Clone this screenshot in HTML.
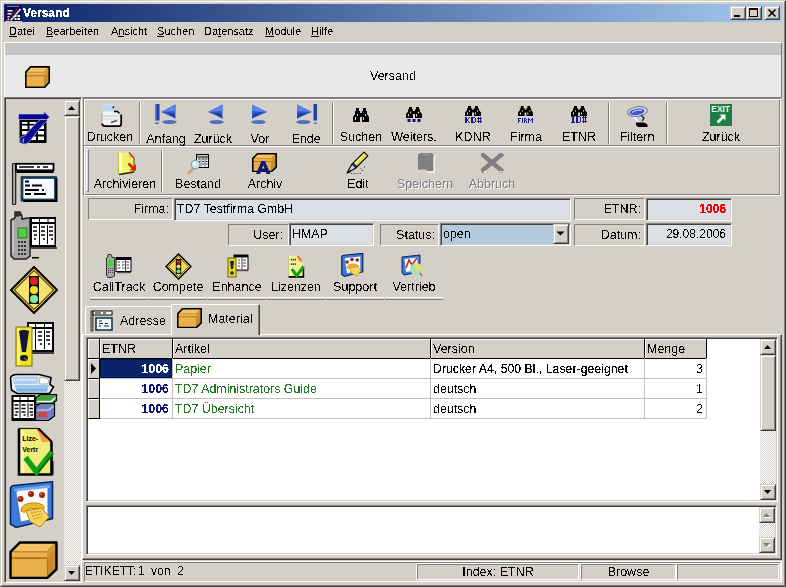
<!DOCTYPE html>
<html><head><meta charset="utf-8">
<style>
*{box-sizing:border-box;margin:0;padding:0}
html,body{width:786px;height:587px;overflow:hidden;background:#D4D0C8;font-family:"Liberation Sans",sans-serif;font-size:12.5px;color:#000}
.a{position:absolute}
.t{position:absolute;white-space:pre;line-height:14px;filter:url(#bin)}
.sk1{border-top:1px solid #808080;border-left:1px solid #808080;border-right:1px solid #fff;border-bottom:1px solid #fff}
.sk2{border-top:1px solid #808080;border-left:1px solid #808080;border-right:1px solid #fff;border-bottom:1px solid #fff;box-shadow:inset 1px 1px 0 #404040, inset -1px -1px 0 #D4D0C8}
.rz2{border-top:1px solid #D4D0C8;border-left:1px solid #D4D0C8;border-right:1px solid #404040;border-bottom:1px solid #404040;box-shadow:inset 1px 1px 0 #fff, inset -1px -1px 0 #808080;background:#D4D0C8}
.rz1{border-top:1px solid #fff;border-left:1px solid #fff;border-right:1px solid #808080;border-bottom:1px solid #808080}
.dith{background-color:#fff;background-image:linear-gradient(45deg,#D4D0C8 25%,transparent 25%,transparent 75%,#D4D0C8 75%),linear-gradient(45deg,#D4D0C8 25%,transparent 25%,transparent 75%,#D4D0C8 75%);background-size:2px 2px;background-position:0 0,1px 1px}
.lbl{position:absolute;text-align:center;white-space:pre;line-height:14px;font-size:12.5px;filter:url(#bin)}
</style></head><body>
<svg width="0" height="0" style="position:absolute"><filter id="bin" x="0" y="0" width="100%" height="100%" color-interpolation-filters="sRGB"><feComponentTransfer><feFuncA type="discrete" tableValues="0 1"/></feComponentTransfer></filter><filter id="binb" x="0" y="0" width="100%" height="100%" color-interpolation-filters="sRGB"><feComponentTransfer><feFuncA type="discrete" tableValues="0 1 1"/></feComponentTransfer></filter><filter id="binm" x="0" y="0" width="100%" height="100%" color-interpolation-filters="sRGB"><feComponentTransfer><feFuncA type="discrete" tableValues="0 0 1 1 1"/></feComponentTransfer></filter></svg>
<!-- window frame -->
<div class="a" style="left:0;top:0;width:786px;height:587px;border-top:1px solid #D4D0C8;border-left:1px solid #D4D0C8;border-right:1px solid #404040;border-bottom:1px solid #404040"></div>
<div class="a" style="left:1px;top:1px;width:784px;height:585px;border-top:1px solid #fff;border-left:1px solid #fff;border-right:1px solid #808080;border-bottom:1px solid #808080"></div>

<!-- title bar -->
<div class="a" style="left:4px;top:4px;width:778px;height:18px;background:linear-gradient(to right,#0A246A,#A6CAF0)"></div>
<svg class="a" style="left:5px;top:5px" width="17" height="17" viewBox="0 0 17 17">
<rect x="0.5" y="0" width="16" height="16" fill="#08084A"/>
<rect x="2" y="0.8" width="12" height="1" fill="#9090D0"/>
<rect x="2.5" y="5" width="5" height="1.5" fill="#fff"/><rect x="2.5" y="8" width="4" height="1.5" fill="#fff"/><rect x="2.5" y="11" width="2" height="1.5" fill="#fff"/><rect x="2.5" y="14" width="2" height="1.2" fill="#fff"/>
<rect x="9.5" y="10" width="5.5" height="5" fill="#fff"/><path d="M9.5 12.5 H15 M12 10 V15" stroke="#000" stroke-width="0.9"/>
<path d="M1.5 15.5 L12.5 3.5" stroke="#C82828" stroke-width="1.3" stroke-dasharray="1.2 0.8"/>
<path d="M5.5 15.5 L15.5 4" stroke="#E8E8F0" stroke-width="1.8"/>
<path d="M5 15 L15 3.5" stroke="#000" stroke-width="0.7" stroke-dasharray="1 1.5"/>
<rect x="0" y="16" width="17" height="1" fill="#C0C0D8"/>
</svg>
<div class="t" style="left:23px;top:5px;color:#fff;font-weight:bold;font-size:12px;line-height:16px;filter:url(#binb)">Versand</div>
<!-- title buttons -->
<div class="a rz2" style="left:730px;top:6px;width:16px;height:14px"></div>
<div class="a" style="left:734px;top:15px;width:6px;height:2px;background:#000"></div>
<div class="a rz2" style="left:746px;top:6px;width:16px;height:14px"></div>
<div class="a" style="left:749px;top:8px;width:9px;height:9px;border:1px solid #000;border-top-width:2px"></div>
<div class="a rz2" style="left:764px;top:6px;width:16px;height:14px"></div>
<svg class="a" style="left:764px;top:6px" width="16" height="14"><path d="M4.5 3.5 L11.5 10.5 M11.5 3.5 L4.5 10.5" stroke="#000" stroke-width="1.6"/></svg>

<!-- menu -->
<div class="t" style="left:9px;top:24px;font-size:11px;line-height:14px"><u>D</u>atei</div>
<div class="t" style="left:46px;top:24px;font-size:11px;line-height:14px"><u>B</u>earbeiten</div>
<div class="t" style="left:111px;top:24px;font-size:11px;line-height:14px">A<u>n</u>sicht</div>
<div class="t" style="left:157px;top:24px;font-size:11px;line-height:14px"><u>S</u>uchen</div>
<div class="t" style="left:204px;top:24px;font-size:11px;line-height:14px">Da<u>t</u>ensatz</div>
<div class="t" style="left:265px;top:24px;font-size:11px;line-height:14px"><u>M</u>odule</div>
<div class="t" style="left:311px;top:24px;font-size:11px;line-height:14px"><u>H</u>ilfe</div>

<!-- header panel -->
<div class="a" style="left:4px;top:42px;width:778px;height:56px;border-top:1px solid #fff;border-left:1px solid #fff;border-right:1px solid #808080;border-bottom:1px solid #808080;background:#E9E9E9"></div>
<div class="a" style="left:5px;top:43px;width:776px;height:12px;background:#C4C4C4"></div>
<div class="t" style="left:370px;top:69px;font-size:12.5px">Versand</div>

<!-- sidebar -->
<div class="a sk2" style="left:4px;top:97px;width:78px;height:486px"></div>
<div class="a rz2" style="left:64px;top:100px;width:16px;height:16px"></div>
<svg class="a" style="left:64px;top:100px" width="16" height="16"><path d="M4 10 H11 L7.5 6 Z" fill="#000"/></svg>
<div class="a rz2" style="left:64px;top:116px;width:16px;height:265px"></div>
<div class="a dith" style="left:64px;top:381px;width:17px;height:185px"></div>
<div class="a rz2" style="left:64px;top:565px;width:16px;height:16px"></div>
<svg class="a" style="left:64px;top:565px" width="16" height="16"><path d="M4 6 H11 L7.5 10 Z" fill="#000"/></svg>

<!-- content container -->


<!-- toolbar bands -->
<div class="a" style="left:83px;top:98px;width:698px;height:49px;border-top:1px solid #808080;border-left:1px solid #808080;border-right:1px solid #fff;border-bottom:1px solid #fff;box-shadow:inset 1px 1px 0 #fff, inset -1px -1px 0 #808080"></div>
<div class="a" style="left:83px;top:145px;width:698px;height:51px;border-top:1px solid #808080;border-left:1px solid #808080;border-right:1px solid #fff;border-bottom:1px solid #fff;box-shadow:inset 1px 1px 0 #fff, inset -1px -1px 0 #808080"></div>


<!-- toolbar separators -->
<div class="a" style="left:139px;top:102px;width:2px;height:42px;border-left:1px solid #808080;border-right:1px solid #fff"></div>
<div class="a" style="left:332px;top:102px;width:2px;height:42px;border-left:1px solid #808080;border-right:1px solid #fff"></div>
<div class="a" style="left:608px;top:102px;width:2px;height:42px;border-left:1px solid #808080;border-right:1px solid #fff"></div>
<div class="a" style="left:666px;top:102px;width:2px;height:42px;border-left:1px solid #808080;border-right:1px solid #fff"></div>
<div class="a" style="left:86px;top:149px;width:3px;height:43px;border-left:1px solid #fff;border-top:1px solid #fff;border-right:1px solid #808080;border-bottom:1px solid #808080"></div>
<div class="a" style="left:161px;top:150px;width:2px;height:42px;border-left:1px solid #808080;border-right:1px solid #fff"></div>

<!-- toolbar labels -->
<div class="lbl" style="left:80px;width:60px;top:130px">Drucken</div>
<div class="lbl" style="left:136px;width:60px;top:132px">Anfang</div>
<div class="lbl" style="left:183px;width:60px;top:132px">Zurück</div>
<div class="lbl" style="left:230px;width:60px;top:132px">Vor</div>
<div class="lbl" style="left:276px;width:60px;top:132px">Ende</div>
<div class="lbl" style="left:331px;width:60px;top:130px">Suchen</div>
<div class="lbl" style="left:384px;width:60px;top:130px">Weiters.</div>
<div class="lbl" style="left:443px;width:60px;top:130px">KDNR</div>
<div class="lbl" style="left:496px;width:60px;top:130px">Firma</div>
<div class="lbl" style="left:549px;width:60px;top:130px">ETNR</div>
<div class="lbl" style="left:607px;width:60px;top:130px">Filtern</div>
<div class="lbl" style="left:691px;width:60px;top:130px">Zurück</div>

<div class="lbl" style="left:90px;width:70px;top:177px">Archivieren</div>
<div class="lbl" style="left:163px;width:70px;top:177px">Bestand</div>
<div class="lbl" style="left:230px;width:70px;top:177px">Archiv</div>
<div class="lbl" style="left:323px;width:70px;top:177px">Edit</div>
<div class="lbl" style="left:390px;width:70px;top:177px;color:#808080;text-shadow:1px 1px 0 #fff">Speichern</div>
<div class="lbl" style="left:457px;width:70px;top:177px;color:#808080;text-shadow:1px 1px 0 #fff">Abbruch</div>

<!-- form -->
<div class="a sk1" style="left:88px;top:198px;width:85px;height:22px"></div>
<div class="t" style="left:88px;width:81px;top:202px;text-align:right">Firma:</div>
<div class="a sk2" style="left:174px;top:198px;width:397px;height:23px;background:#DCDFE6"></div>
<div class="t" style="left:177px;top:202px;font-size:12.4px">TD7 Testfirma GmbH</div>
<div class="a sk1" style="left:574px;top:198px;width:71px;height:22px"></div>
<div class="t" style="left:574px;width:67px;top:202px;text-align:right">ETNR:</div>
<div class="a sk2" style="left:646px;top:198px;width:86px;height:23px;background:#DCDFE6"></div>
<div class="t" style="left:646px;width:80px;top:202px;text-align:right;color:#F00000;font-weight:bold;font-size:12px;filter:url(#binb)">1006</div>

<div class="a sk1" style="left:228px;top:224px;width:61px;height:22px"></div>
<div class="t" style="left:228px;width:55px;top:228px;text-align:right">User:</div>
<div class="a sk2" style="left:289px;top:223px;width:85px;height:23px;background:#DCDFE6"></div>
<div class="t" style="left:292px;top:227px;font-size:12.4px">HMAP</div>
<div class="a sk1" style="left:380px;top:224px;width:59px;height:22px"></div>
<div class="t" style="left:380px;width:55px;top:228px;text-align:right">Status:</div>
<div class="a sk2" style="left:440px;top:223px;width:131px;height:23px;background:#B4C8DC"></div>
<div class="t" style="left:443px;top:227px;font-size:12.4px">open</div>
<div class="a rz2" style="left:553px;top:224px;width:16px;height:20px"></div>
<svg class="a" style="left:553px;top:224px" width="16" height="20"><path d="M3.5 7.5 H11.5 L7.5 11.5 Z" fill="#000"/></svg>
<div class="a sk1" style="left:574px;top:224px;width:71px;height:22px"></div>
<div class="t" style="left:574px;width:67px;top:228px;text-align:right">Datum:</div>
<div class="a sk2" style="left:646px;top:223px;width:86px;height:23px;background:#DCDFE6"></div>
<div class="t" style="left:646px;width:80px;top:227px;text-align:right;font-size:12px">29.08.2006</div>

<!-- module buttons -->
<div class="a" style="left:90px;top:297px;width:58px;height:3px;border-top:1px solid #fff;border-bottom:1px solid #808080"></div>
<div class="a" style="left:149px;top:297px;width:58px;height:3px;border-top:1px solid #fff;border-bottom:1px solid #808080"></div>
<div class="a" style="left:208px;top:297px;width:58px;height:3px;border-top:1px solid #fff;border-bottom:1px solid #808080"></div>
<div class="a" style="left:267px;top:297px;width:58px;height:3px;border-top:1px solid #fff;border-bottom:1px solid #808080"></div>
<div class="a" style="left:326px;top:297px;width:58px;height:3px;border-top:1px solid #fff;border-bottom:1px solid #808080"></div>
<div class="a" style="left:385px;top:297px;width:58px;height:3px;border-top:1px solid #fff;border-bottom:1px solid #808080"></div>
<div class="lbl" style="left:90px;width:58px;top:280px">CallTrack</div>
<div class="lbl" style="left:149px;width:58px;top:280px">Compete</div>
<div class="lbl" style="left:208px;width:58px;top:280px">Enhance</div>
<div class="lbl" style="left:267px;width:58px;top:280px">Lizenzen</div>
<div class="lbl" style="left:326px;width:58px;top:280px">Support</div>
<div class="lbl" style="left:385px;width:58px;top:280px">Vertrieb</div>

<!-- tabs -->
<div class="a" style="left:82px;top:334px;width:700px;height:226px;border-top:1px solid #fff;border-left:1px solid #fff;border-right:1px solid #404040;border-bottom:1px solid #404040;box-shadow:inset -1px -1px 0 #808080"></div>
<div class="a" style="left:85px;top:306px;width:86px;height:28px;border-top:1px solid #fff;border-left:1px solid #fff;border-top-left-radius:2px"></div>
<div class="t" style="left:120px;top:314px">Adresse</div>
<div class="a" style="left:171px;top:304px;width:89px;height:31px;background:#D4D0C8;border-top:1px solid #fff;border-left:1px solid #fff;border-right:1px solid #404040;box-shadow:inset -1px 0 0 #808080;border-top-left-radius:2px"></div>
<div class="t" style="left:208px;top:312px">Material</div>

<!-- grid -->
<div class="a sk2" style="left:86px;top:337px;width:692px;height:165px;background:#fff"></div>
<!-- header -->
<div class="a" style="left:88px;top:339px;width:619px;height:20px;background:#D4D0C8;border-bottom:1px solid #000;border-top:1px solid #fff"></div>
<div class="a" style="left:88px;top:339px;width:1px;height:19px;background:#fff"></div>
<div class="a" style="left:99px;top:339px;width:1px;height:80px;background:#000"></div>
<div class="a" style="left:100px;top:339px;width:1px;height:19px;background:#fff"></div>
<div class="a" style="left:172px;top:339px;width:1px;height:19px;background:#000"></div>
<div class="a" style="left:173px;top:339px;width:1px;height:19px;background:#fff"></div>
<div class="a" style="left:430px;top:339px;width:1px;height:19px;background:#000"></div>
<div class="a" style="left:431px;top:339px;width:1px;height:19px;background:#fff"></div>
<div class="a" style="left:644px;top:339px;width:1px;height:19px;background:#000"></div>
<div class="a" style="left:645px;top:339px;width:1px;height:19px;background:#fff"></div>
<div class="a" style="left:706px;top:339px;width:1px;height:19px;background:#000"></div>
<div class="t" style="left:102px;top:342px">ETNR</div>
<div class="t" style="left:175px;top:342px">Artikel</div>
<div class="t" style="left:433px;top:342px">Version</div>
<div class="t" style="left:647px;top:342px">Menge</div>
<!-- indicator cells -->
<div class="a" style="left:88px;top:359px;width:11px;height:20px;background:#D4D0C8;border-top:1px solid #fff;border-left:1px solid #fff;border-bottom:1px solid #000"></div>
<div class="a" style="left:88px;top:379px;width:11px;height:20px;background:#D4D0C8;border-top:1px solid #fff;border-left:1px solid #fff;border-bottom:1px solid #000"></div>
<div class="a" style="left:88px;top:399px;width:11px;height:20px;background:#D4D0C8;border-top:1px solid #fff;border-left:1px solid #fff;border-bottom:1px solid #000"></div>
<svg class="a" style="left:88px;top:358px" width="11" height="20"><path d="M3 5 L8 10.5 L3 16 Z" fill="#000"/></svg>
<!-- body lines -->
<div class="a" style="left:100px;top:378px;width:607px;height:1px;background:#C0C0C0"></div>
<div class="a" style="left:100px;top:398px;width:607px;height:1px;background:#C0C0C0"></div>
<div class="a" style="left:100px;top:418px;width:607px;height:1px;background:#C0C0C0"></div>
<div class="a" style="left:172px;top:358px;width:1px;height:61px;background:#C0C0C0"></div>
<div class="a" style="left:430px;top:358px;width:1px;height:61px;background:#C0C0C0"></div>
<div class="a" style="left:644px;top:358px;width:1px;height:61px;background:#C0C0C0"></div>
<div class="a" style="left:706px;top:358px;width:1px;height:61px;background:#C0C0C0"></div>
<!-- selected cell -->
<div class="a" style="left:100px;top:359px;width:72px;height:19px;background:#0A246A;outline:1px dotted #000;outline-offset:-1px"></div>
<div class="t" style="left:100px;width:69px;top:362px;text-align:right;color:#fff;font-weight:bold;font-size:12.4px;filter:url(#binm)">1006</div>
<div class="t" style="left:100px;width:69px;top:382px;text-align:right;color:#10107A;font-weight:bold;font-size:12.4px;filter:url(#binm)">1006</div>
<div class="t" style="left:100px;width:69px;top:402px;text-align:right;color:#10107A;font-weight:bold;font-size:12.4px;filter:url(#binm)">1006</div>
<div class="t" style="left:175px;top:362px;color:#207820;font-size:12.4px">Papier</div>
<div class="t" style="left:175px;top:382px;color:#207820;font-size:12.4px">TD7 Administrators Guide</div>
<div class="t" style="left:175px;top:402px;color:#207820;font-size:12.4px">TD7 Übersicht</div>
<div class="t" style="left:433px;top:362px;font-size:12.3px;filter:url(#binm)">Drucker A4, 500 Bl., Laser-geeignet</div>
<div class="t" style="left:433px;top:382px;font-size:12.4px">deutsch</div>
<div class="t" style="left:433px;top:402px;font-size:12.4px">deutsch</div>
<div class="t" style="left:645px;width:58px;top:362px;text-align:right;font-size:12.4px">3</div>
<div class="t" style="left:645px;width:58px;top:382px;text-align:right;font-size:12.4px">1</div>
<div class="t" style="left:645px;width:58px;top:402px;text-align:right;font-size:12.4px">2</div>
<!-- grid scrollbar -->
<div class="a dith" style="left:760px;top:339px;width:16px;height:161px"></div>
<div class="a rz2" style="left:760px;top:339px;width:16px;height:16px"></div>
<svg class="a" style="left:760px;top:339px" width="16" height="16"><path d="M4 10 H11 L7.5 6 Z" fill="#000"/></svg>
<div class="a rz2" style="left:760px;top:355px;width:16px;height:76px"></div>
<div class="a rz2" style="left:760px;top:484px;width:16px;height:16px"></div>
<svg class="a" style="left:760px;top:484px" width="16" height="16"><path d="M4 6 H11 L7.5 10 Z" fill="#000"/></svg>

<!-- memo -->
<div class="a sk2" style="left:86px;top:505px;width:691px;height:50px;background:#fff"></div>
<div class="a dith" style="left:759px;top:507px;width:16px;height:46px"></div>
<div class="a rz2" style="left:759px;top:507px;width:16px;height:16px"></div>
<svg class="a" style="left:759px;top:507px" width="16" height="16"><path d="M5 11 H12 L8.5 7 Z" fill="#fff"/><path d="M4 10 H11 L7.5 6 Z" fill="#808080"/></svg>
<div class="a rz2" style="left:759px;top:537px;width:16px;height:16px"></div>
<svg class="a" style="left:759px;top:537px" width="16" height="16"><path d="M5 7 H12 L8.5 11 Z" fill="#fff"/><path d="M4 6 H11 L7.5 10 Z" fill="#808080"/></svg>

<!-- status bar -->
<div class="a" style="left:83px;top:561px;width:699px;height:22px;border-top:1px solid #fff;border-right:1px solid #fff;border-bottom:1px solid #D4D0C8"></div>
<div class="a sk1" style="left:84px;top:562px;width:697px;height:20px"></div>
<div class="t" style="left:85px;top:564px;font-size:12px">ETIKETT:</div><div class="t" style="left:138px;top:564px;font-size:12px">1</div><div class="t" style="left:151px;top:564px;font-size:12px">von</div><div class="t" style="left:177px;top:564px;font-size:12px">2</div>
<div class="a" style="left:416px;top:563px;width:164px;height:17px;border-left:1px solid #fff;border-top:1px solid #fff"></div>
<div class="a sk1" style="left:417px;top:564px;width:162px;height:16px"></div>
<div class="t" style="left:417px;width:162px;top:565px;text-align:center">Index: ETNR</div>
<div class="a" style="left:580px;top:563px;width:96px;height:17px;border-left:1px solid #fff;border-top:1px solid #fff"></div>
<div class="a sk1" style="left:581px;top:564px;width:95px;height:16px"></div>
<div class="t" style="left:581px;width:95px;top:565px;text-align:center">Browse</div>
<div class="a" style="left:676px;top:563px;width:103px;height:17px;border-left:1px solid #fff;border-top:1px solid #fff"></div>
<div class="a sk1" style="left:677px;top:564px;width:102px;height:16px"></div>

<!-- ICONS -->
<svg width="0" height="0" style="position:absolute">
<defs>
<symbol id="box" viewBox="0 0 48 37">
<path d="M1 10.5 L10.5 1 L46.5 1 L46.5 27.5 L37.5 36 L1 36 Z" fill="#E9AE46"/>
<path d="M2 10.5 L11 2 L45.5 2 L37 10.5 Z" fill="#F4C262"/>
<path d="M2 10.5 H37 V16 H2 Z" fill="#ECB04C"/>
<path d="M2 15.5 H37 V17.5 H2 Z" fill="#B47A22"/>
<path d="M37.5 10.5 L45.5 2 V27 L37.5 35 Z" fill="#C98C2C"/>
<path d="M37.5 10.5 L45.5 2 V7 L37.5 16 Z" fill="#D89A36"/>
<path d="M2 18 H37 V35 H2 Z" fill="#EBB04A"/>
<path d="M37.5 17 V35.5 M2 10.5 H37 L45.5 2" fill="none" stroke="#9A6818" stroke-width="0.8"/>
<path d="M1.5 10.5 L10.5 1.5 L46.5 1.5 L46.5 27.5 L37.5 36 L1.5 36 Z" fill="none" stroke="#000" stroke-linejoin="round"/>
</symbol>
<symbol id="binoc" viewBox="0 0 16 14">
<path d="M3 0 H6 V3 H7 V5 H9 V3 H10 V0 H13 V3 H14 V6 L16 9 V14 H9 V9 H7 V14 H0 V9 L2 6 V3 H3 Z" fill="#000"/>
<rect x="2" y="9" width="1" height="3" fill="#F0F080"/><rect x="4" y="6" width="1" height="2" fill="#F0F080"/>
<rect x="10" y="9" width="1" height="3" fill="#F0F080"/><rect x="12" y="6" width="1" height="2" fill="#F0F080"/>
</symbol>
<symbol id="tbl" viewBox="0 0 28 31">
<rect x="0" y="0" width="27" height="30" fill="#000"/>
<rect x="2" y="2" width="7" height="3" fill="#fff"/><rect x="10" y="2" width="7" height="3" fill="#fff"/><rect x="18" y="2" width="7" height="3" fill="#fff"/>
<rect x="2" y="7" width="7" height="21" fill="#fff"/><rect x="10" y="7" width="15" height="21" fill="#fff"/>
<path d="M3.5 10 H7 M3.5 14 H7 M4 18 H7 M3.5 22 H6 M11.5 10 H15 M12 14 H15 M11.5 18 H15 M13 22 H15 M19 10 H23 M19 14 H23 M19 18 H23 M21 22 H23" stroke="#000" stroke-width="1.6"/>
<rect x="17" y="8" width="1" height="19" fill="#000"/>
<rect x="2" y="30" width="26" height="1" fill="#404040"/>
</symbol>
</defs>
</svg>

<!-- header box -->
<svg class="a" style="left:25px;top:66px" width="25" height="22" viewBox="0 0 48 37" preserveAspectRatio="none"><use href="#box" stroke-width="3.0"/></svg>

<!-- printer -->
<svg class="a" style="left:100px;top:103px" width="24" height="24" viewBox="0 0 24 24">
<path d="M4 2 L12 1.5 L13 8.5 L4 9 Z" fill="#B8D8F8" stroke="#D8E4F0" stroke-width="0.6"/>
<rect x="12.5" y="3.5" width="1.6" height="1.6" fill="#000"/>
<path d="M2 11 Q2 8.5 4.5 8.5 H15 L19 9.5 Q21 10 21 12 V20 Q21 22.5 19 22.5 H4.5 Q2 22.5 2 20 Z" fill="#F2F2F2"/>
<path d="M2.5 13 H20.5" stroke="#C4C8C4" stroke-width="1"/><path d="M2.5 16 H20.5" stroke="#D0D8D0" stroke-width="1"/>
<path d="M2 20.5 Q2.5 23.2 5 23.2 H19 Q21.2 23.2 21.2 20.5 V11.5" fill="none" stroke="#000" stroke-width="1.8"/>
<path d="M14 8.5 H17.5 L19.5 10.5" fill="none" stroke="#000" stroke-width="1.5"/>
<path d="M2 10 V19" stroke="#909090" stroke-width="0.8"/>
<path d="M11 19.5 L17 17.5" stroke="#505050" stroke-width="1.5"/>
</svg>

<!-- nav arrows -->
<svg class="a" style="left:154px;top:103px" width="25" height="23" viewBox="0 0 25 23">
<rect x="1.5" y="1" width="4" height="16.5" fill="#1E40A0"/><rect x="1.5" y="1" width="1.2" height="16.5" fill="#5070D0"/>
<path d="M7 9 L21.5 1.5 V15.5 Z" fill="#2E5CD0"/><path d="M7 9 L21.5 1.5 V8 Z" fill="#5A84E8"/><path d="M12 9 L21.5 15.5 L20 11 Z" fill="#1C3C98"/>
<ellipse cx="15.5" cy="19" rx="7.2" ry="2" fill="#5070C0"/><rect x="1" y="19.5" width="4" height="1.5" fill="#5070C0"/>
</svg>
<svg class="a" style="left:207px;top:103px" width="18" height="23" viewBox="0 0 18 23">
<path d="M1 9 L15.5 1.5 V15.5 Z" fill="#2E5CD0"/><path d="M1 9 L15.5 1.5 V8 Z" fill="#5A84E8"/><path d="M6 9 L15.5 15.5 L14 11 Z" fill="#1C3C98"/>
<ellipse cx="9.5" cy="19" rx="7.2" ry="2" fill="#5070C0"/>
</svg>
<svg class="a" style="left:250px;top:103px" width="18" height="23" viewBox="0 0 18 23">
<path d="M17 9 L2 1.5 V15.5 Z" fill="#2E5CD0"/><path d="M17 9 L2 1.5 V8 Z" fill="#5A84E8"/><path d="M12 9 L2 15.5 L3.5 11 Z" fill="#1C3C98"/>
<ellipse cx="8.5" cy="19" rx="7.2" ry="2" fill="#5070C0"/>
</svg>
<svg class="a" style="left:295px;top:103px" width="24" height="23" viewBox="0 0 24 23">
<path d="M17 9 L2 1.5 V15.5 Z" fill="#2E5CD0"/><path d="M17 9 L2 1.5 V8 Z" fill="#5A84E8"/><path d="M12 9 L2 15.5 L3.5 11 Z" fill="#1C3C98"/>
<rect x="18.5" y="1" width="3.5" height="16.5" fill="#1E40A0"/>
<ellipse cx="8.5" cy="19" rx="7.2" ry="2" fill="#5070C0"/><rect x="19" y="19.5" width="3" height="1.5" fill="#5070C0"/>
</svg>

<!-- binoculars -->
<svg class="a" style="left:353px;top:108px" width="16" height="14"><use href="#binoc"/></svg>
<svg class="a" style="left:406px;top:107px" width="16" height="11" viewBox="0 0 16 14" preserveAspectRatio="none"><use href="#binoc"/></svg>
<svg class="a" style="left:406px;top:119px" width="16" height="4"><rect x="1.5" y="0" width="3" height="3" fill="#101070"/><rect x="6.5" y="0" width="3" height="3" fill="#101070"/><rect x="11.5" y="0" width="3" height="3" fill="#101070"/></svg>
<svg class="a" style="left:465px;top:106px" width="16" height="10" viewBox="0 0 16 14" preserveAspectRatio="none"><use href="#binoc"/></svg>
<svg class="a" style="left:465px;top:117px" width="17" height="6" shape-rendering="crispEdges"><g fill="#1A1A88"><rect x="0" y="0" width="2" height="1"/><rect x="4" y="0" width="1" height="1"/><rect x="6" y="0" width="4" height="1"/><rect x="13" y="0" width="1" height="1"/><rect x="15" y="0" width="1" height="1"/><rect x="0" y="1" width="2" height="1"/><rect x="3" y="1" width="1" height="1"/><rect x="6" y="1" width="2" height="1"/><rect x="10" y="1" width="1" height="1"/><rect x="12" y="1" width="5" height="1"/><rect x="0" y="2" width="3" height="1"/><rect x="6" y="2" width="2" height="1"/><rect x="10" y="2" width="1" height="1"/><rect x="13" y="2" width="1" height="1"/><rect x="15" y="2" width="1" height="1"/><rect x="0" y="3" width="3" height="1"/><rect x="6" y="3" width="2" height="1"/><rect x="10" y="3" width="1" height="1"/><rect x="13" y="3" width="1" height="1"/><rect x="15" y="3" width="1" height="1"/><rect x="0" y="4" width="2" height="1"/><rect x="3" y="4" width="1" height="1"/><rect x="6" y="4" width="2" height="1"/><rect x="10" y="4" width="1" height="1"/><rect x="12" y="4" width="5" height="1"/><rect x="0" y="5" width="2" height="1"/><rect x="4" y="5" width="1" height="1"/><rect x="6" y="5" width="4" height="1"/><rect x="13" y="5" width="1" height="1"/><rect x="15" y="5" width="1" height="1"/></g></svg>
<svg class="a" style="left:518px;top:106px" width="15" height="10" viewBox="0 0 16 14" preserveAspectRatio="none"><use href="#binoc"/></svg>
<svg class="a" style="left:518px;top:118px" width="15" height="5" shape-rendering="crispEdges"><g fill="#1A1A88"><rect x="0" y="0" width="3" height="1"/><rect x="4" y="0" width="1" height="1"/><rect x="6" y="0" width="2" height="1"/><rect x="10" y="0" width="1" height="1"/><rect x="14" y="0" width="1" height="1"/><rect x="0" y="1" width="1" height="1"/><rect x="4" y="1" width="1" height="1"/><rect x="6" y="1" width="1" height="1"/><rect x="8" y="1" width="1" height="1"/><rect x="10" y="1" width="2" height="1"/><rect x="13" y="1" width="2" height="1"/><rect x="0" y="2" width="2" height="1"/><rect x="4" y="2" width="1" height="1"/><rect x="6" y="2" width="2" height="1"/><rect x="10" y="2" width="1" height="1"/><rect x="12" y="2" width="1" height="1"/><rect x="14" y="2" width="1" height="1"/><rect x="0" y="3" width="1" height="1"/><rect x="4" y="3" width="1" height="1"/><rect x="6" y="3" width="1" height="1"/><rect x="8" y="3" width="1" height="1"/><rect x="10" y="3" width="1" height="1"/><rect x="14" y="3" width="1" height="1"/><rect x="0" y="4" width="1" height="1"/><rect x="4" y="4" width="1" height="1"/><rect x="6" y="4" width="1" height="1"/><rect x="8" y="4" width="1" height="1"/><rect x="10" y="4" width="1" height="1"/><rect x="14" y="4" width="1" height="1"/></g></svg>
<svg class="a" style="left:571px;top:106px" width="16" height="10" viewBox="0 0 16 14" preserveAspectRatio="none"><use href="#binoc"/></svg>
<svg class="a" style="left:571px;top:116px" width="16" height="7" shape-rendering="crispEdges"><g fill="#1A1A88"><rect x="0" y="0" width="4" height="1"/><rect x="5" y="0" width="4" height="1"/><rect x="12" y="0" width="1" height="1"/><rect x="14" y="0" width="1" height="1"/><rect x="1" y="1" width="2" height="1"/><rect x="5" y="1" width="2" height="1"/><rect x="9" y="1" width="1" height="1"/><rect x="11" y="1" width="5" height="1"/><rect x="1" y="2" width="2" height="1"/><rect x="5" y="2" width="2" height="1"/><rect x="9" y="2" width="1" height="1"/><rect x="12" y="2" width="1" height="1"/><rect x="14" y="2" width="1" height="1"/><rect x="1" y="3" width="2" height="1"/><rect x="5" y="3" width="2" height="1"/><rect x="9" y="3" width="1" height="1"/><rect x="12" y="3" width="1" height="1"/><rect x="14" y="3" width="1" height="1"/><rect x="1" y="4" width="2" height="1"/><rect x="5" y="4" width="2" height="1"/><rect x="9" y="4" width="1" height="1"/><rect x="12" y="4" width="1" height="1"/><rect x="14" y="4" width="1" height="1"/><rect x="1" y="5" width="2" height="1"/><rect x="5" y="5" width="2" height="1"/><rect x="9" y="5" width="1" height="1"/><rect x="11" y="5" width="5" height="1"/><rect x="0" y="6" width="4" height="1"/><rect x="5" y="6" width="4" height="1"/><rect x="12" y="6" width="1" height="1"/><rect x="14" y="6" width="1" height="1"/></g></svg>

<!-- funnel -->
<svg class="a" style="left:626px;top:106px" width="25" height="22" viewBox="0 0 25 22">
<path d="M1.5 6 L11 18 L14 18 L21.5 6 Z" fill="#C8CCD4"/>
<path d="M5 9 L11.5 16.5 L13 16.5 L9 9 Z" fill="#F4F6F8"/>
<ellipse cx="11.5" cy="5.5" rx="10" ry="4.8" transform="rotate(-8 11.5 5.5)" fill="#D8DDE8" stroke="#707888" stroke-width="1"/>
<ellipse cx="11" cy="5.8" rx="7.5" ry="3.2" transform="rotate(-8 11 5.8)" fill="#3858C8"/>
<path d="M6 6.5 Q10 3 16 4.5" stroke="#B8C8F8" stroke-width="1.3" fill="none"/>
<path d="M15 9 L18 12 L16 15" stroke="#202020" fill="none" stroke-width="1.3"/>
<path d="M10 16.5 H18 L21.5 18.5 V21 H12 L10 19 Z" fill="#000"/>
</svg>

<!-- exit -->
<svg class="a" style="left:709px;top:103px" width="24" height="24" viewBox="0 0 24 24">
<rect x="1" y="1" width="22" height="22" fill="#1E7E46"/>
<text x="2.3" y="8.8" font-family="Liberation Sans" font-weight="bold" font-size="8.4" fill="#F0FFF4" textLength="18.6" lengthAdjust="spacingAndGlyphs">EXIT</text>
<path d="M8.5 19.5 L14 14" stroke="#F0FFF4" stroke-width="2.6"/>
<path d="M10.5 11.5 H16.5 V17.5 Z" fill="#F0FFF4"/>
</svg>

<!-- archivieren doc -->
<svg class="a" style="left:117px;top:151px" width="22" height="25" viewBox="0 0 22 25">
<path d="M1.5 1.5 H12 L17 7 V22 L2 23.5 Z" fill="#F4F070"/>
<path d="M2 2 H5 V23 H2 Z" fill="#FFFFC0"/>
<path d="M12 1.5 L17 7 H12 Z" fill="#F0C060"/><path d="M12 1.5 L17 7" stroke="#C84020" stroke-width="1.5"/>
<path d="M17 7 V21" stroke="#404000" stroke-width="1"/><path d="M2 23.5 L17 21" stroke="#202000" stroke-width="1.5"/>
<path d="M1.5 1.5 V23" stroke="#C8C040" stroke-width="1"/>
<path d="M11.5 12.5 L16 17" stroke="#E02000" stroke-width="2.6" fill="none"/><path d="M12.5 19.5 H19 V13 Z" fill="#E02000"/>
</svg>

<!-- bestand -->
<svg class="a" style="left:183px;top:150px" width="30" height="26" viewBox="0 0 30 26">
<rect x="13" y="4" width="13" height="14" fill="#000"/>
<rect x="14" y="5.2" width="11" height="1.2" fill="#fff"/>
<rect x="14" y="7.5" width="11" height="9.5" fill="#F4F4FA"/>
<path d="M15 9 H17 M19 9 H21 M22.5 9 H24.5 M15 11.5 H17 M19 11.5 H21 M22.5 11.5 H24.5 M19 14 H21 M22.5 14 H24.5" stroke="#202020" stroke-width="1"/>
<path d="M18 7.5 V17 M22 7.5 V17" stroke="#404040" stroke-width="0.7"/>
<path d="M6 22.5 L10 18.5" stroke="#D8A070" stroke-width="2.8" stroke-linecap="round"/>
<circle cx="12.5" cy="14.5" r="4.3" fill="#C8E8F0" stroke="#7890A0" stroke-width="1"/>
<circle cx="11.5" cy="13.5" r="1.8" fill="#F0FAFF"/>
</svg>

<!-- archiv box with A -->
<svg class="a" style="left:252px;top:153px" width="25" height="19" viewBox="0 0 48 37" preserveAspectRatio="none"><use href="#box" stroke-width="3.0"/></svg>
<svg class="a" style="left:255px;top:160px" width="17" height="15" viewBox="0 0 17 15"><path d="M1 14 L6.5 1 H10 L15.5 14 H11.5 L10.3 11 H6.2 L5 14 Z M7 8.5 H9.5 L8.2 5 Z" fill="#0A1A80" fill-rule="evenodd"/></svg>

<!-- edit pencil -->
<svg class="a" style="left:340px;top:148px" width="40" height="30" viewBox="0 0 40 30">
<path d="M7 25 L11.75 16.45 L15.55 20.25 Z" fill="#D0D8C0"/>
<path d="M11.75 16.45 L13.65 14.55 L17.45 18.35 L15.55 20.25 Z" fill="#1818A0"/>
<path d="M13.65 14.55 L24.1 4.1 L27.9 7.9 L17.45 18.35 Z" fill="#E8E040"/>
<path d="M14.5 15.5 L24.8 5.2" stroke="#F8F8A0" stroke-width="1.3"/>
<path d="M7 25 L11.75 16.45 L24.1 4.1 L27.9 7.9 L15.55 20.25 Z" fill="none" stroke="#000" stroke-width="1.1" stroke-linejoin="round"/>
<path d="M7 25.5 L8.5 21.5 L11 24 Z" fill="#000"/>
<path d="M11 25.5 H21" stroke="#505060" stroke-width="1" stroke-dasharray="1 1.2"/>
<path d="M21 20.5 L23 23.5 M24 19 H26" stroke="#202060" stroke-width="1" stroke-dasharray="1 1"/>
</svg>

<!-- speichern floppy (disabled) -->
<svg class="a" style="left:417px;top:152px" width="19" height="21" viewBox="0 0 19 21">
<path d="M1 3 L3 1 H15 L17 3 V19 H10 L9 17.5 H3 L1 18 Z" fill="#808080"/>
<path d="M17 4 V20 H10 M17.5 3 L18 4" stroke="#fff" stroke-width="1.2" fill="none"/>
<path d="M5 1 H12 V3.5 H5 Z" fill="#909090"/>
</svg>
<!-- abbruch X (disabled) -->
<svg class="a" style="left:481px;top:153px" width="23" height="20" viewBox="0 0 23 20">
<path d="M2 2 L20 17 M20 2 L2 17" stroke="#808080" stroke-width="4.5" stroke-linecap="square"/>
<path d="M21 18.5 L19 18.5 M5 18.5 L3 18.5" stroke="#fff" stroke-width="1"/>
</svg>
<!-- CallTrack -->
<svg class="a" style="left:105px;top:253px" width="27" height="26" viewBox="0 0 27 26">
<path d="M3 1.5 H6 L7 4 V4.5 H9.5 V23 L6 24.5 H3 L1.5 22 V5 L3 4 Z" fill="#A8A8A8" stroke="#303030" stroke-width="1"/>
<rect x="3" y="7" width="5" height="6" fill="#50D040"/>
<path d="M3 15.5 H8 M3 17.5 H8 M3 19.5 H8" stroke="#404040" stroke-width="1" stroke-dasharray="1 1"/>
<rect x="11" y="4.5" width="15" height="14" fill="#fff" stroke="#000" stroke-width="1"/>
<rect x="11" y="4.5" width="15" height="2.5" fill="#000"/>
<path d="M12.5 9 H15 M12.5 12 H15 M12.5 15 H15 M17 9 H19.5 M17 12 H19.5 M17 15 H19.5 M21.5 9 H24 M21.5 12 H24 M21.5 15 H24 M20.5 7 V18" stroke="#404040" stroke-width="1"/>
<rect x="12" y="19" width="14" height="1.2" fill="#505050"/>
</svg>
<!-- Compete -->
<svg class="a" style="left:165px;top:253px" width="27" height="27" viewBox="0 0 27 27">
<path d="M13.5 1 L26 13.5 L13.5 26 L1 13.5 Z" fill="#E8D050" stroke="#000" stroke-width="1.5"/>
<path d="M13.5 3.5 L23.5 13.5 L13.5 23.5 L3.5 13.5 Z" fill="#F2D858" stroke="#504010" stroke-width="0.7"/>
<rect x="10.8" y="6" width="5.4" height="15" fill="#101010"/>
<circle cx="13.5" cy="8.8" r="2" fill="#E02020"/><circle cx="13.5" cy="13.5" r="2" fill="#F0E020"/><circle cx="13.5" cy="18.2" r="2" fill="#70E090"/>
</svg>
<!-- Enhance -->
<svg class="a" style="left:227px;top:254px" width="22" height="25" viewBox="0 0 22 25">
<rect x="7" y="1" width="14" height="15" fill="#fff" stroke="#000" stroke-width="1"/>
<rect x="7" y="1" width="14" height="2.5" fill="#000"/>
<path d="M11 6 H13 M11 9 H13 M11 12 H13 M16 6 H19 M16 9 H19 M16 12 H19 M15 4 V15" stroke="#404040" stroke-width="1"/>
<rect x="8" y="16" width="13" height="1.2" fill="#505050"/>
<rect x="1" y="4" width="8" height="19" fill="#E8D820" stroke="#706000" stroke-width="1"/>
<path d="M3 7 H7 L6 15 H4 Z" fill="#202040"/><circle cx="5" cy="19" r="1.8" fill="#202040"/>
</svg>
<!-- Lizenzen -->
<svg class="a" style="left:288px;top:255px" width="17" height="23" viewBox="0 0 38 50" preserveAspectRatio="none">
<path d="M1.5 1.5 H21.5 L34 15 V47.5 H1.5 Z" fill="#F4F090"/>
<path d="M2.5 2.5 H9 V47 H2.5 Z" fill="#FAF8C8"/>
<path d="M20 2 L34 15 H25 Z" fill="#E8A060"/><path d="M21 2 L30 11" stroke="#E04820" stroke-width="2.4"/>
<path d="M1.5 3 V47.5" stroke="#C8C060" stroke-width="2"/>
<path d="M1.5 47.5 H34.5 V30" fill="none" stroke="#000" stroke-width="3.5"/>
<path d="M6 10 H18 M6 20 H18" stroke="#404040" stroke-width="4" stroke-dasharray="3 1.5"/>
<path d="M8.5 30.5 L19.5 45 L35 25" stroke="#10A018" stroke-width="7" fill="none"/>
</svg>
<!-- Support -->
<svg class="a" style="left:341px;top:253px" width="23" height="24" viewBox="0 0 46 48">
<path d="M1.5 8 Q1.5 5 5 4.5 L43.5 0.8 V37.5 L7 46.5 L1.5 43 Z" fill="#3A7AD8" stroke="#0A2460" stroke-width="2.4"/>
<path d="M7.5 12 Q7.5 10 10 10 L38.5 7 V35 L12 40.5 Z" fill="#FAFAF8"/>
<circle cx="12" cy="18" r="3.6" fill="#A02010"/><circle cx="22" cy="13" r="3.6" fill="#A02010"/><circle cx="32.5" cy="14" r="3.6" fill="#A02010"/>
<path d="M12 30 Q12 23 22 22 Q32 21 35.5 26 L33.5 29.5 Q28 26.5 22 27.5 Q16.5 28.5 15.5 31.5 Z" fill="#F0B828" stroke="#A87810" stroke-width="1"/>
<path d="M17 30 L33 27 L40 36 L31 46 L21 40.5 Z" fill="#F8D458" stroke="#B08010" stroke-width="1.2"/>
</svg>
<!-- Vertrieb -->
<svg class="a" style="left:401px;top:254px" width="26" height="24" viewBox="0 0 26 24">
<path d="M1 3 L19 1 V18 L3 21 L1 19 Z" fill="#3A78D8" stroke="#102860" stroke-width="1"/>
<path d="M3.5 5 L16.5 3.5 V16 L5 18 Z" fill="#F8F8F8"/>
<path d="M5 14 L8 6 L11 11 L16 4" stroke="#C02020" stroke-width="1.5" fill="none"/>
<circle cx="15" cy="15" r="6" fill="#A8E0B0"/><circle cx="17" cy="13" r="3.5" fill="#F0E060" opacity="0.8"/>
<path d="M19 19 L21 22" stroke="#606060" stroke-width="1.2"/>
</svg>

<!-- tab icons -->
<svg class="a" style="left:90px;top:310px" width="24" height="22" viewBox="0 0 24 22">
<rect x="1" y="1" width="2" height="20" fill="#909090" stroke="#303030" stroke-width="0.8"/>
<rect x="3" y="1" width="19" height="4" fill="#fff" stroke="#000" stroke-width="1"/>
<path d="M5 3 H11 M13 3 H16" stroke="#000" stroke-width="1"/>
<rect x="6" y="8" width="16" height="12" fill="#F0F8FF" stroke="#1A3A50" stroke-width="1.6"/>
<path d="M9 11 H12 M9 13.5 H13 M15 13.5 H18 M9 16 H11 M14 16 H19" stroke="#202020" stroke-width="1.2"/>
</svg>
<svg class="a" style="left:177px;top:308px" width="25" height="20" viewBox="0 0 48 37" preserveAspectRatio="none"><use href="#box" stroke-width="3.0"/></svg>

<!-- SIDEBAR ICONS -->
<!-- 1 -->
<svg class="a" style="left:17px;top:110px" width="34" height="35" viewBox="0 0 34 35">
<rect x="2.5" y="9.5" width="27" height="23.5" fill="#000"/>
<g fill="#fff">
<rect x="5" y="12" width="5.5" height="1.8"/><rect x="12.5" y="12" width="6.5" height="1.8"/><rect x="21" y="12" width="6" height="1.8"/>
<rect x="5" y="15.5" width="5.5" height="3.5"/><rect x="12.5" y="15.5" width="6.5" height="3.5"/><rect x="21" y="15.5" width="6" height="3.5"/>
<rect x="5" y="21" width="5.5" height="3.5"/><rect x="12.5" y="21" width="6.5" height="3.5"/><rect x="21" y="21" width="6" height="3.5"/>
<rect x="5" y="26.5" width="5.5" height="3.5"/><rect x="12.5" y="26.5" width="6.5" height="3.5"/><rect x="21" y="26.5" width="6" height="3.5"/>
</g>
<path d="M1.5 4 H27 V1.5 L32.5 7 L27 12.5 V9.5 H1.5 Z" fill="#0A0A90" stroke="#C8C8F0" stroke-width="0.6"/>
<path d="M23.5 9.5 H31 Q21 20 13.5 30.5 Q10 35 6 34 Q2 33 2.8 29 Q3.8 25.5 8 25.8 Q15 16 23.5 9.5 Z" fill="#0A0A90" stroke="#D8D8F8" stroke-width="0.6"/>
<path d="M7 28.5 Q5 30.5 6.5 32.5" stroke="#fff" stroke-width="0.9" fill="none"/>
</svg>
<!-- 2 -->
<svg class="a" style="left:11px;top:162px" width="48" height="44" viewBox="0 0 48 44">
<rect x="1.5" y="1.5" width="3.2" height="41" rx="1" fill="#A8A8A8" stroke="#202020" stroke-width="1.2"/>
<rect x="5" y="1.8" width="37.5" height="6.5" fill="#fff" stroke="#000" stroke-width="1.8"/>
<path d="M8 5 H23 M26 5 H29 M32 5 H37" stroke="#000" stroke-width="1.6"/>
<rect x="5.5" y="8.5" width="37" height="2.5" fill="#000"/>
<rect x="11" y="15.5" width="33.5" height="22.5" fill="#F4FAFF" stroke="#1A3A58" stroke-width="2.8"/>
<rect x="12" y="38" width="34" height="2" fill="#000"/><rect x="44.5" y="16" width="2" height="24" fill="#000"/>
<path d="M14 19.5 H18 M14 23.5 H19 M21 23.5 H31 M14 28 H28 M31 28 H33 M14 32 H20 M23 32 H35" stroke="#000" stroke-width="2.2"/>
</svg>
<!-- 3 -->
<svg class="a" style="left:10px;top:211px" width="48" height="50" viewBox="0 0 48 50">
<path d="M5 1 H10 L12 5 V8 L18 7 H20 V45 L16 48 H4 L1 45 V9 L5 7 Z" fill="#A8A8A8" stroke="#202020" stroke-width="1.5"/>
<path d="M5 1 H10 L11 5 L5 6 Z" fill="#303030"/>
<rect x="8" y="17" width="9" height="10" fill="#50D040" stroke="#305030" stroke-width="0.8"/>
<path d="M8 31 H17 M8 35 H17 M8 39 H17 M8 43 H16" stroke="#303030" stroke-width="1.8" stroke-dasharray="2 1"/>
<path d="M3 10 V42" stroke="#E0E0E0" stroke-width="1"/>
<rect x="20" y="6" width="26" height="30" fill="#000"/>
<rect x="22" y="8" width="7" height="3" fill="#fff"/><rect x="30" y="8" width="7.5" height="3" fill="#fff"/><rect x="38.5" y="8" width="6" height="3" fill="#fff"/>
<rect x="22" y="13" width="7" height="21" fill="#fff"/><rect x="30" y="13" width="14.5" height="21" fill="#fff"/>
<path d="M23 16 H27 M23 20 H27 M24 24 H27 M24 28 H26 M31 16 H35 M31 20 H35 M31 24 H35 M33 28 H35 M39 16 H43 M39 20 H43 M39 24 H43 M41 28 H43" stroke="#000" stroke-width="1.6"/>
<rect x="37" y="14" width="1" height="19" fill="#000"/>
<rect x="21" y="36" width="26" height="2" fill="#404040"/>
<rect x="22" y="46" width="7" height="1.5" fill="#000"/>
</svg>
<!-- 4 -->
<svg class="a" style="left:10px;top:266px" width="48" height="48" viewBox="0 0 48 48">
<path d="M24 1 L47 24 L24 47 L1 24 Z" fill="#F0D040" stroke="#000" stroke-width="2"/>
<path d="M24 4.5 L43.5 24 L24 43.5 L4.5 24 Z" fill="#F5D860" stroke="#000" stroke-width="1"/>
<path d="M24 6 L42 24 L24 42 L6 24 Z" fill="#F8E070"/>
<rect x="19" y="10" width="10" height="28" fill="#101010"/>
<circle cx="24" cy="15" r="4" fill="#E02020"/><circle cx="24" cy="24" r="4" fill="#F0E020"/><circle cx="24" cy="33" r="4" fill="#80E8A0"/>
</svg>
<!-- 5 -->
<svg class="a" style="left:14px;top:321px" width="42" height="47" viewBox="0 0 42 47">
<rect x="13" y="1" width="27" height="30" fill="#000"/>
<rect x="15" y="3" width="6" height="3" fill="#fff"/><rect x="22" y="3" width="8" height="3" fill="#fff"/><rect x="31" y="3" width="7" height="3" fill="#fff"/>
<rect x="15" y="8" width="6" height="21" fill="#fff"/><rect x="22" y="8" width="16" height="21" fill="#fff"/>
<path d="M24 11 H28 M24 15 H28 M24 19 H28 M26 23 H28 M32 11 H36 M32 15 H36 M32 19 H36 M34 23 H36" stroke="#000" stroke-width="1.6"/>
<rect x="30" y="9" width="1" height="19" fill="#000"/>
<rect x="14" y="31" width="26" height="2" fill="#404040"/>
<rect x="2" y="6" width="16" height="39" fill="#F0E020" stroke="#807000" stroke-width="1"/>
<rect x="3" y="7" width="3" height="37" fill="#F8F080"/>
<path d="M5 10 Q10 8 15 10 L12 31 H8 Z" fill="#141438"/>
<ellipse cx="10" cy="37" rx="4" ry="3" fill="#141438"/><path d="M10 37 L13 39" stroke="#8080C0" stroke-width="1"/>
</svg>
<!-- 6 -->
<svg class="a" style="left:9px;top:373px" width="50" height="50" viewBox="0 0 50 50">
<path d="M1.5 5 Q2.5 1.5 8 1.5 H30 L34 2.5 L42 4.5 L41 11.5 L44.5 14 L40.5 20.5 H8 L2.5 17 Z" fill="#E8F0F8" stroke="#000" stroke-width="1.6"/>
<path d="M3.5 6 Q4.5 3.5 9 3.5 H29.5 L28.5 11 H5.5 Z" fill="#B0CCF0"/>
<path d="M5 7 H27" stroke="#E0ECFA" stroke-width="1.2"/>
<path d="M5.5 12 H40 L38 19 H8 Z" fill="#98C4F0"/>
<path d="M7 17 H38" stroke="#70A0D8" stroke-width="1"/>
<path d="M31 4 L40 6 L39 11 L30 11 Z" fill="#FAFAFA" stroke="#808080" stroke-width="0.6"/>
<rect x="2.5" y="22" width="24" height="26" fill="#000"/>
<g fill="#fff"><rect x="4.5" y="24" width="6" height="3"/><rect x="11.5" y="24" width="7" height="3"/><rect x="19.5" y="24" width="5.5" height="3"/>
<rect x="4.5" y="29" width="6" height="16"/><rect x="11.5" y="29" width="13.5" height="16"/></g>
<path d="M5.5 32 H9.5 M5.5 35.5 H9.5 M6.5 39 H9.5 M5.5 42 H8.5 M12.5 32 H16.5 M12.5 35.5 H16.5 M12.5 39 H16.5 M14.5 42 H16.5 M20.5 32 H24 M20.5 35.5 H24 M20.5 39 H24 M21.5 42 H24" stroke="#000" stroke-width="1.5"/>
<rect x="18.5" y="30" width="1" height="14" fill="#000"/>
<path d="M26.5 25 L31 21.5 H47.5 V27.5 L42.5 31.5 H26.5 Z" fill="#40A040" stroke="#000" stroke-width="1.2"/>
<path d="M28 28.5 H42 L46.5 24.5" stroke="#F4F4F4" stroke-width="1.6" fill="none"/>
<path d="M26.5 34 L31 30.5 H45.5 V43 L39.5 47.5 H26.5 Z" fill="#7080C0" stroke="#000" stroke-width="1.2"/>
<path d="M28 37 H40 L44.5 33" stroke="#D8DCF0" stroke-width="1.2" fill="none"/>
<rect x="29" y="39" width="9" height="5.5" fill="#C84848"/>
</svg>
<!-- 7 -->
<svg class="a" style="left:17px;top:427px" width="38" height="50" viewBox="0 0 38 50">
<path d="M1.5 1.5 H21.5 L34 15 V47.5 H1.5 Z" fill="#F0EC78"/>
<path d="M2.5 2.5 H7 V47 H2.5 Z" fill="#F8F6B0"/>
<path d="M20 2 L34 15 H25 Z" fill="#F0A050"/><path d="M21 2 L30 11" stroke="#E04820" stroke-width="2.2"/>
<path d="M2 1.5 V47.5 H34.5 V15" fill="none" stroke="#000" stroke-width="2.6"/>
<path d="M1.5 1.5 H21.5" stroke="#202000" stroke-width="1.2"/>
<path d="M21.5 1.5 L35 15" stroke="#000" stroke-width="1.8"/>
<rect x="34" y="34" width="2.5" height="14" fill="#000"/>
<text x="5.2" y="14.3" font-family="Liberation Sans" font-weight="bold" font-size="8" fill="#000" textLength="16" lengthAdjust="spacingAndGlyphs">Lize-</text>
<text x="5.2" y="25.2" font-family="Liberation Sans" font-weight="bold" font-size="7.6" fill="#101010" textLength="16" lengthAdjust="spacingAndGlyphs">Vertr</text>
<path d="M8.5 30.5 L19.5 45 L35 25" stroke="#10A018" stroke-width="5.5" fill="none"/>
<path d="M21 45.5 L36 27" stroke="#086010" stroke-width="1.2" fill="none"/>
</svg>
<!-- 8 -->
<svg class="a" style="left:9px;top:481px" width="46" height="48" viewBox="0 0 46 48">
<path d="M1.5 8 Q1.5 5 5 4.5 L43.5 0.8 V37.5 L7 46.5 L1.5 43 Z" fill="#3A7AD8" stroke="#0A2460" stroke-width="1.6"/>
<path d="M4 8 L41 4 V7 L7 11 Z" fill="#7AAAF0"/>
<path d="M7.5 12 Q7.5 10 10 10 L38.5 7 V35 L12 40.5 Z" fill="#FAFAF8"/>
<circle cx="11.5" cy="18" r="3" fill="#A02010"/><circle cx="22" cy="13" r="3" fill="#A02010"/><circle cx="33" cy="14" r="3" fill="#A02010"/>
<circle cx="10.8" cy="17.2" r="0.9" fill="#F08070"/><circle cx="21.3" cy="12.2" r="0.9" fill="#F08070"/><circle cx="32.3" cy="13.2" r="0.9" fill="#F08070"/>
<path d="M12 30 Q12 23 22 22 Q32 21 35.5 26 L33.5 29.5 Q28 26.5 22 27.5 Q16.5 28.5 15.5 31.5 Z" fill="#F0B828" stroke="#A87810" stroke-width="0.8"/>
<path d="M17 30 L33 27 L40 36 L31 46 L21 40.5 Z" fill="#F8D458" stroke="#B08010" stroke-width="0.9"/>
<path d="M22 32 L32 30 M23 35 L33 33 M24.5 38 L33.5 36" stroke="#C89828" stroke-width="1.3" stroke-dasharray="2 1"/>
</svg>
<!-- 9 box -->
<svg class="a" style="left:9px;top:541px" width="49" height="38" viewBox="0 0 48 37" preserveAspectRatio="none"><use href="#box" stroke-width="2.4"/></svg>

</body></html>
